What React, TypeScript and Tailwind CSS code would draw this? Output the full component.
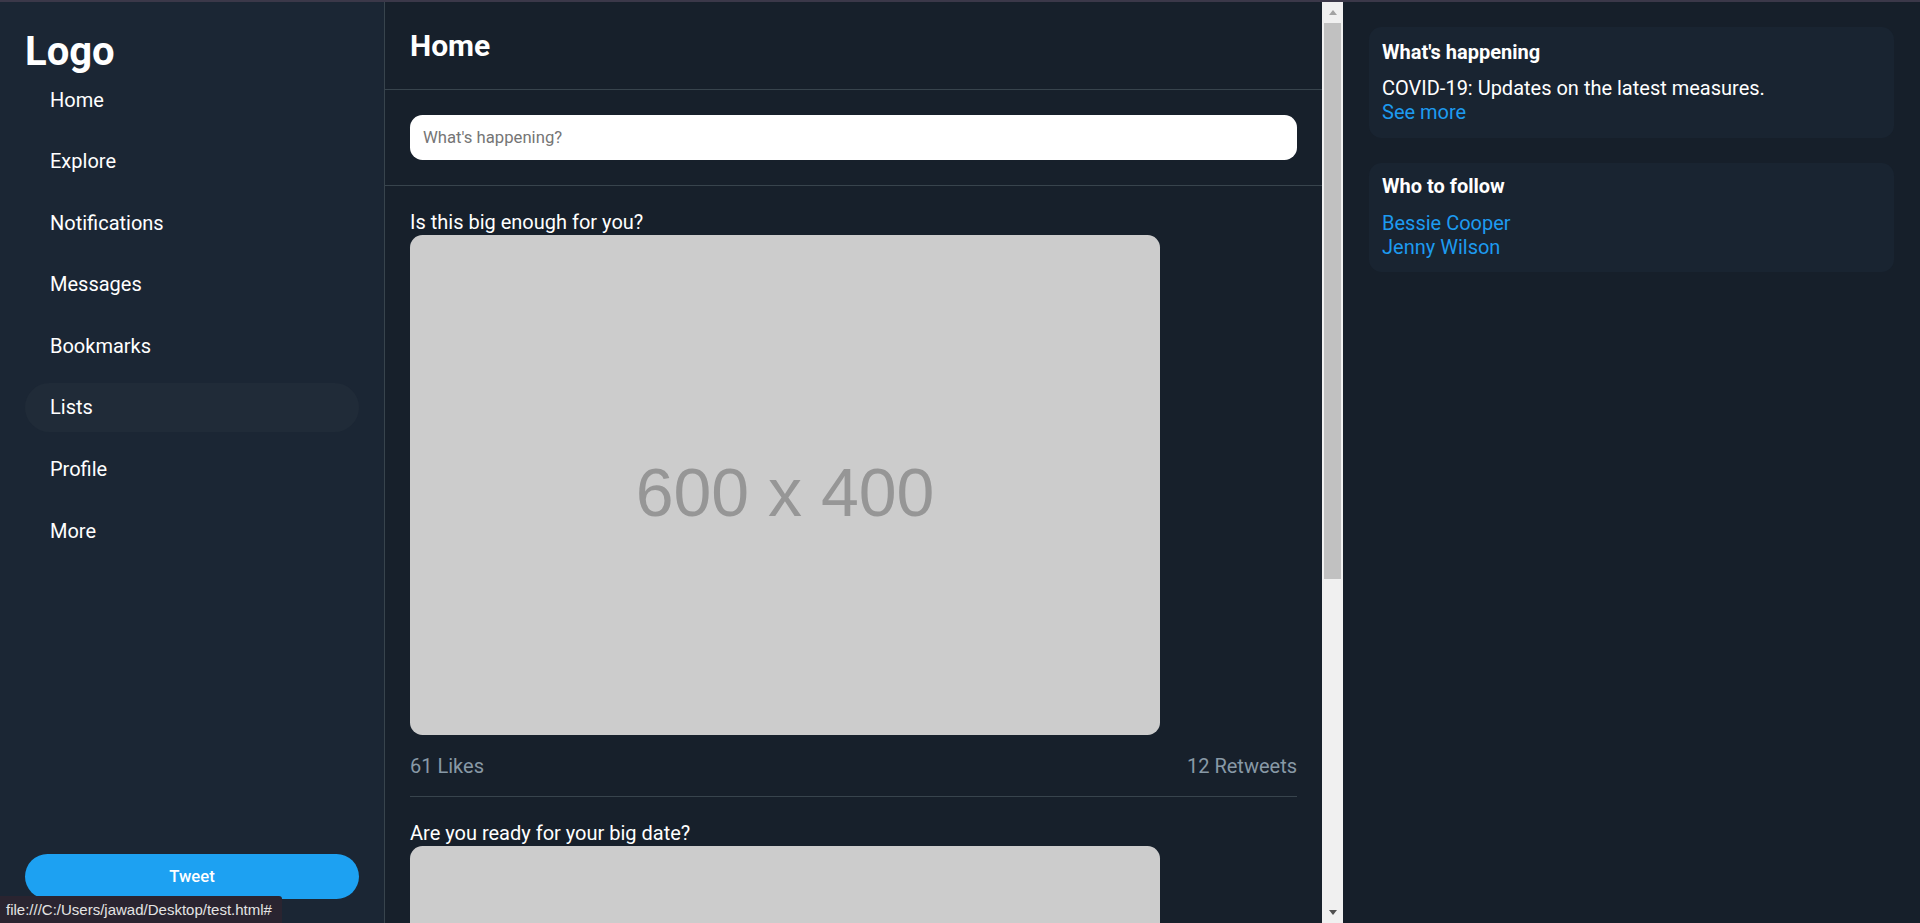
const navItems = ['Home', 'Explore', 'Notifications', 'Messages', 'Bookmarks', 'Lists', 'Profile', 'More'];

const tweets = [
  { id: 1, text: 'Is this big enough for you?', likes: 61, retweets: 12 },
  { id: 2, text: 'Are you ready for your big date?', likes: 34, retweets: 8 },
];

const follow = ['Bessie Cooper', 'Jenny Wilson'];

function Sidebar() {
  return (
    <aside className="w-[385px] shrink-0 h-full bg-[#1b2634] border-r border-[#38444d] p-[25px] pb-[24px] flex flex-col justify-between">
      <div>
        <div className="text-[40px] font-bold text-white pt-[1px]">Logo</div>
        <nav className="flex flex-col gap-[12.6px]">
          {navItems.map((item) => (
            <a
              key={item}
              href="#"
              className={`block rounded-full px-[25px] py-[12.5px] text-[20px] text-white ${
                item === 'Lists' ? 'bg-[#202b38]' : ''
              }`}
            >
              {item}
            </a>
          ))}
        </nav>
      </div>
      <button className="w-full h-[45px] rounded-full bg-[#1da1f2] text-white text-[16.7px] font-medium">
        Tweet
      </button>
    </aside>
  );
}

function Placeholder() {
  return (
    <div className="w-[750px] h-[500px] shrink-0 rounded-[12.5px] bg-[#cccccc] flex items-center justify-center pt-[13px] mt-[1px]">
      <span className="font-['Liberation_Sans',sans-serif] text-[68px] text-[#969696]">600 x 400</span>
    </div>
  );
}

function Feed() {
  return (
    <main className="w-[937px] shrink-0 h-full bg-[#17202b] overflow-hidden">
      <header className="h-[88px] border-b border-[#38444d] px-[25px] flex items-center">
        <h1 className="text-[30px] font-bold text-white">Home</h1>
      </header>
      <div className="border-b border-[#38444d] p-[25px] pb-[25.5px]">
        <input
          type="text"
          placeholder="What's happening?"
          className="w-full h-[44.5px] rounded-[12.5px] bg-white px-[13px] text-[16.7px] text-black placeholder:text-[#757575] outline-none"
        />
      </div>
      {tweets.map((t) => (
        <article key={t.id} className="px-[25px] pt-[24px]">
          <p className="text-[20px] text-white">{t.text}</p>
          <Placeholder />
          <div className="flex justify-between py-[18.5px] border-b border-[#38444d] text-[20px] text-[#8899a6]">
            <span>{t.likes} Likes</span>
            <span>{t.retweets} Retweets</span>
          </div>
        </article>
      ))}
    </main>
  );
}

function Scrollbar() {
  return (
    <div className="w-[21px] shrink-0 h-full bg-[#f0f0f0] flex flex-col">
      <div className="h-[21px] flex items-center justify-center">
        <div className="w-0 h-0 border-x-[4.5px] border-x-transparent border-b-[5px] border-b-[#a3a3a3]" />
      </div>
      <div className="mx-[2px] h-[556px] bg-[#c1c1c1]" />
      <div className="flex-1" />
      <div className="h-[21px] flex items-center justify-center">
        <div className="w-0 h-0 border-x-[4.5px] border-x-transparent border-t-[5px] border-t-[#505050]" />
      </div>
    </div>
  );
}

function RightPanel() {
  return (
    <section className="flex-1 h-full bg-[#161f2a] px-[26px] py-[25px] flex flex-col gap-[25px]">
      <div className="rounded-[12.5px] bg-[#192431] px-[13px] pt-[12.5px] pb-[14px]">
        <h3 className="text-[20px] font-bold text-white mb-[12.5px]">What's happening</h3>
        <p className="text-[20px] text-white">COVID-19: Updates on the latest measures.</p>
        <a href="#" className="block text-[20px] text-[#1d9bf0]">
          See more
        </a>
      </div>
      <div className="rounded-[12.5px] bg-[#192431] px-[13px] pt-[11px] pb-[12.5px]">
        <h3 className="text-[20px] font-bold text-white mb-[13px]">Who to follow</h3>
        {follow.map((name) => (
          <a key={name} href="#" className="block text-[20px] text-[#1d9bf0]">
            {name}
          </a>
        ))}
      </div>
    </section>
  );
}

export default function App() {
  return (
    <div className="relative w-full h-[923px] overflow-hidden flex flex-col bg-[#17202b] font-['Roboto',sans-serif] leading-[normal]">
      <div className="h-[2px] shrink-0 bg-[#3b3849]" />
      <div className="flex h-[921px]">
        <Sidebar />
        <Feed />
        <Scrollbar />
        <RightPanel />
      </div>
      <div className="absolute left-0 bottom-0 h-[27px] pl-[6px] pr-[10px] flex items-center rounded-tr-[3px] bg-[#2a2430] text-[15px] text-[#e4e4e4] font-['Liberation_Sans',sans-serif]">
        file:///C:/Users/jawad/Desktop/test.html#
      </div>
    </div>
  );
}
